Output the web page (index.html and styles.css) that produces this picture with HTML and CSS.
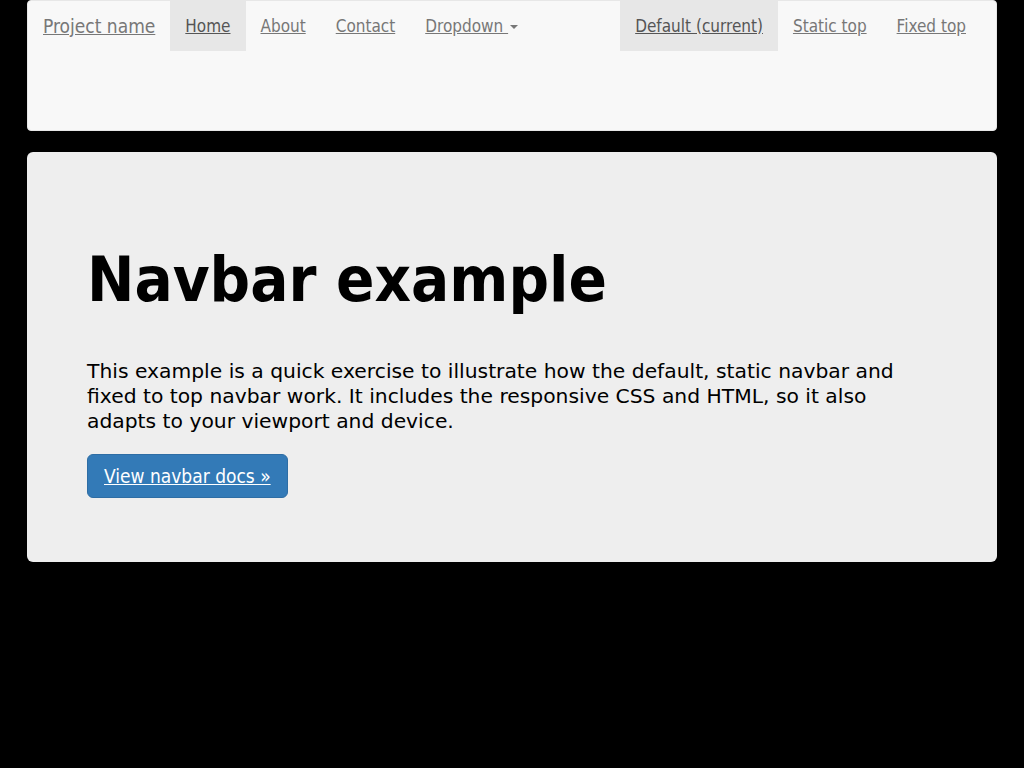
FILE: index.html
```html
<!DOCTYPE html>
<html>
<head>
<meta charset="utf-8">
<title>Navbar example</title>
<link rel="stylesheet" href="styles.css">
</head>
<body>
<div class="container">
  <nav class="navbar">
    <div class="navbar-row">
      <a class="brand" href="#">Project name</a>
      <ul class="nav">
        <li class="active"><a href="#">Home</a></li>
        <li><a href="#">About</a></li>
        <li><a href="#">Contact</a></li>
        <li><a href="#">Dropdown <span class="caret"></span></a></li>
      </ul>
      <ul class="nav nav-right">
        <li class="active"><a href="#">Default (current)</a></li>
        <li><a href="#">Static top</a></li>
        <li><a href="#">Fixed top</a></li>
      </ul>
    </div>
  </nav>
  <div class="jumbotron">
    <h1>Navbar example</h1>
    <p>This example is a quick exercise to illustrate how the default, static navbar and fixed to top navbar work. It includes the responsive CSS and HTML, so it also adapts to your viewport and device.</p>
    <a class="btn" href="#">View navbar docs &raquo;</a>
  </div>
</div>
</body>
</html>
```
FILE: styles.css
```css
* { box-sizing: border-box; }
html, body {
  margin: 0;
  padding: 0;
  background: #000;
}
body {
  font-family: "DejaVu Sans Condensed", "DejaVu Sans", sans-serif;
  color: #000;
}
.container {
  width: 970px;
  margin: 0 auto;
}
.navbar {
  height: 131px;
  background: #f8f8f8;
  border: 1px solid #e7e7e7;
  border-radius: 4px;
  margin-bottom: 21px;
}
.navbar-row {
  display: flex;
  align-items: flex-start;
  padding-right: 15px;
}
.brand {
  display: block;
  height: 50px;
  padding: 15px;
  font-size: 19px;
  line-height: 20px;
  color: #777;
  text-decoration: underline;
}
.nav {
  display: flex;
  list-style: none;
  margin: 0;
  padding: 0;
}
.nav-right {
  margin-left: auto;
}
.nav li a {
  display: block;
  padding: 15px;
  font-size: 17px;
  line-height: 20px;
  color: #777;
  text-decoration: underline;
}
.nav li.active a {
  background: #e7e7e7;
  color: #555;
}
.caret {
  display: inline-block;
  width: 0;
  height: 0;
  margin-left: 2px;
  vertical-align: middle;
  border-top: 4px solid;
  border-right: 4px solid transparent;
  border-left: 4px solid transparent;
}
.jumbotron {
  background: #eee;
  border-radius: 6px;
  padding: 48px 60px 48px;
}
.jumbotron h1 {
  margin: 45px 0 0;
  font-size: 63px;
  line-height: 69px;
  font-weight: bold;
}
.jumbotron p {
  margin: 45px 0 20px;
  font-family: "DejaVu Sans", sans-serif;
  font-size: 20.3px;
  line-height: 25px;
}
.btn {
  display: inline-block;
  padding: 9px 16px;
  font-size: 19px;
  line-height: 24px;
  color: #fff;
  background: #337ab7;
  border: 1px solid #2e6da4;
  border-radius: 6px;
  text-decoration: underline;
  margin-bottom: 16px;
}
```
